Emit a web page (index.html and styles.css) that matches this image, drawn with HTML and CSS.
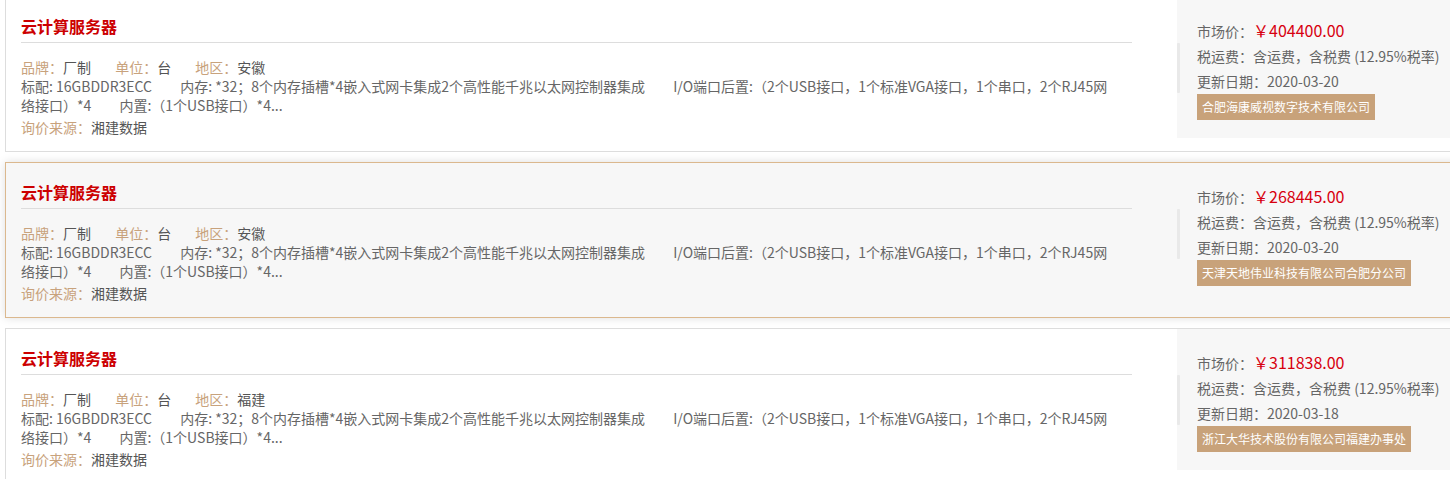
FILE: index.html
```
<!DOCTYPE html>
<html lang="zh-CN">
  <head>
    <meta charset="utf-8">
    <meta name="viewport" content="width=device-width,initial-scale=1.0">
    <title>询价结果</title>
    <link rel="stylesheet" href="styles.css">
  </head>
  <body>
    <div class="price-list">
      <!-- item 1 -->
      <div class="price-item">
        <div class="item-main">
          <h3 class="item-title">云计算服务器</h3>
          <div class="item-attrs">
            <span class="attr"><em>品牌：</em>厂制</span>
            <span class="attr"><em>单位：</em>台</span>
            <span class="attr"><em>地区：</em>安徽</span>
          </div>
          <div class="item-spec">
            <span>标配: 16GBDDR3ECC</span>
            <span>内存: *32；8个内存插槽*4嵌入式网卡集成2个高性能千兆以太网控制器集成</span>
            <span>I/O端口后置:（2个USB接口，1个标准VGA接口，1个串口，2个RJ45网络接口）*4</span>
            <span>内置:（1个USB接口）*4...</span>
          </div>
          <div class="item-source"><em>询价来源：</em>湘建数据</div>
        </div>
        <div class="item-side">
          <div class="side-handle"></div>
          <div class="side-info">
            <p>市场价：<span class="price">￥404400.00</span></p>
            <p>税运费：含运费，含税费 (12.95%税率)</p>
            <p>更新日期：2020-03-20</p>
            <span class="supplier">合肥海康威视数字技术有限公司</span>
          </div>
        </div>
      </div>

      <!-- item 2 (hovered) -->
      <div class="price-item active">
        <div class="item-main">
          <h3 class="item-title">云计算服务器</h3>
          <div class="item-attrs">
            <span class="attr"><em>品牌：</em>厂制</span>
            <span class="attr"><em>单位：</em>台</span>
            <span class="attr"><em>地区：</em>安徽</span>
          </div>
          <div class="item-spec">
            <span>标配: 16GBDDR3ECC</span>
            <span>内存: *32；8个内存插槽*4嵌入式网卡集成2个高性能千兆以太网控制器集成</span>
            <span>I/O端口后置:（2个USB接口，1个标准VGA接口，1个串口，2个RJ45网络接口）*4</span>
            <span>内置:（1个USB接口）*4...</span>
          </div>
          <div class="item-source"><em>询价来源：</em>湘建数据</div>
        </div>
        <div class="item-side">
          <div class="side-handle"></div>
          <div class="side-info">
            <p>市场价：<span class="price">￥268445.00</span></p>
            <p>税运费：含运费，含税费 (12.95%税率)</p>
            <p>更新日期：2020-03-20</p>
            <span class="supplier">天津天地伟业科技有限公司合肥分公司</span>
          </div>
        </div>
      </div>

      <!-- item 3 -->
      <div class="price-item">
        <div class="item-main">
          <h3 class="item-title">云计算服务器</h3>
          <div class="item-attrs">
            <span class="attr"><em>品牌：</em>厂制</span>
            <span class="attr"><em>单位：</em>台</span>
            <span class="attr"><em>地区：</em>福建</span>
          </div>
          <div class="item-spec">
            <span>标配: 16GBDDR3ECC</span>
            <span>内存: *32；8个内存插槽*4嵌入式网卡集成2个高性能千兆以太网控制器集成</span>
            <span>I/O端口后置:（2个USB接口，1个标准VGA接口，1个串口，2个RJ45网络接口）*4</span>
            <span>内置:（1个USB接口）*4...</span>
          </div>
          <div class="item-source"><em>询价来源：</em>湘建数据</div>
        </div>
        <div class="item-side">
          <div class="side-handle"></div>
          <div class="side-info">
            <p>市场价：<span class="price">￥311838.00</span></p>
            <p>税运费：含运费，含税费 (12.95%税率)</p>
            <p>更新日期：2020-03-18</p>
            <span class="supplier">浙江大华技术股份有限公司福建办事处</span>
          </div>
        </div>
      </div>
    </div>
  </body>
</html>
```

FILE: styles.css
```
body {
  margin: 0;
  padding: 0;
  background: #fff;
  font-family: "Microsoft YaHei", "Noto Sans CJK TC", "Noto Sans CJK SC", sans-serif;
  font-size: 14px;
  color: #555;
  overflow: hidden;
}

/* list of quotes */
.price-list {
  margin: -4px -20px 0 5px;
}

.price-item {
  display: flex;
  height: 154px;
  border: 1px solid #ddd;
  margin-bottom: 10px;
  background: #fff;
}

.price-item.active {
  border-color: #dbb88e;
  background: #f7f7f7;
  box-shadow: 0 0 9px rgba(0, 0, 0, 0.13);
}

.item-main {
  width: 1111px;
  padding-left: 15px;
}

.item-title {
  margin: 0;
  padding-top: 17px;
  padding-bottom: 4px;
  border-bottom: 1px solid #ddd;
  font-size: 16px;
  font-weight: bold;
  line-height: 24px;
  color: #cc0000;
}

.item-attrs {
  margin-top: 15px;
  line-height: 19px;
}

.attr {
  margin-right: 21px;
}

em {
  font-style: normal;
  color: #c8a27c;
}

.item-spec {
  padding-right: 15px;
  line-height: 19px;
  color: #666;
}

.item-spec span {
  margin-right: 25px;
}

.item-source {
  margin-top: 3px;
  line-height: 19px;
}

/* right side summary */
.item-side {
  display: flex;
  align-self: flex-start;
  height: 141px;
  margin-left: 45px;
  flex: 1;
  background: #f7f7f7;
}

.side-handle {
  width: 3px;
  height: 50px;
  margin-top: 46px;
  background: #e9e9e9;
  border-radius: 1px;
}

.side-info {
  padding: 21px 0 0 17px;
  color: #666;
}

.side-info p {
  margin: 0;
  line-height: 25px;
  white-space: nowrap;
}

.price {
  font-size: 16px;
  color: #d7000f;
}

.supplier {
  display: inline-block;
  padding: 0 5px;
  line-height: 26px;
  font-size: 12px;
  color: #fff;
  background: #c8a27a;
  white-space: nowrap;
}
```
